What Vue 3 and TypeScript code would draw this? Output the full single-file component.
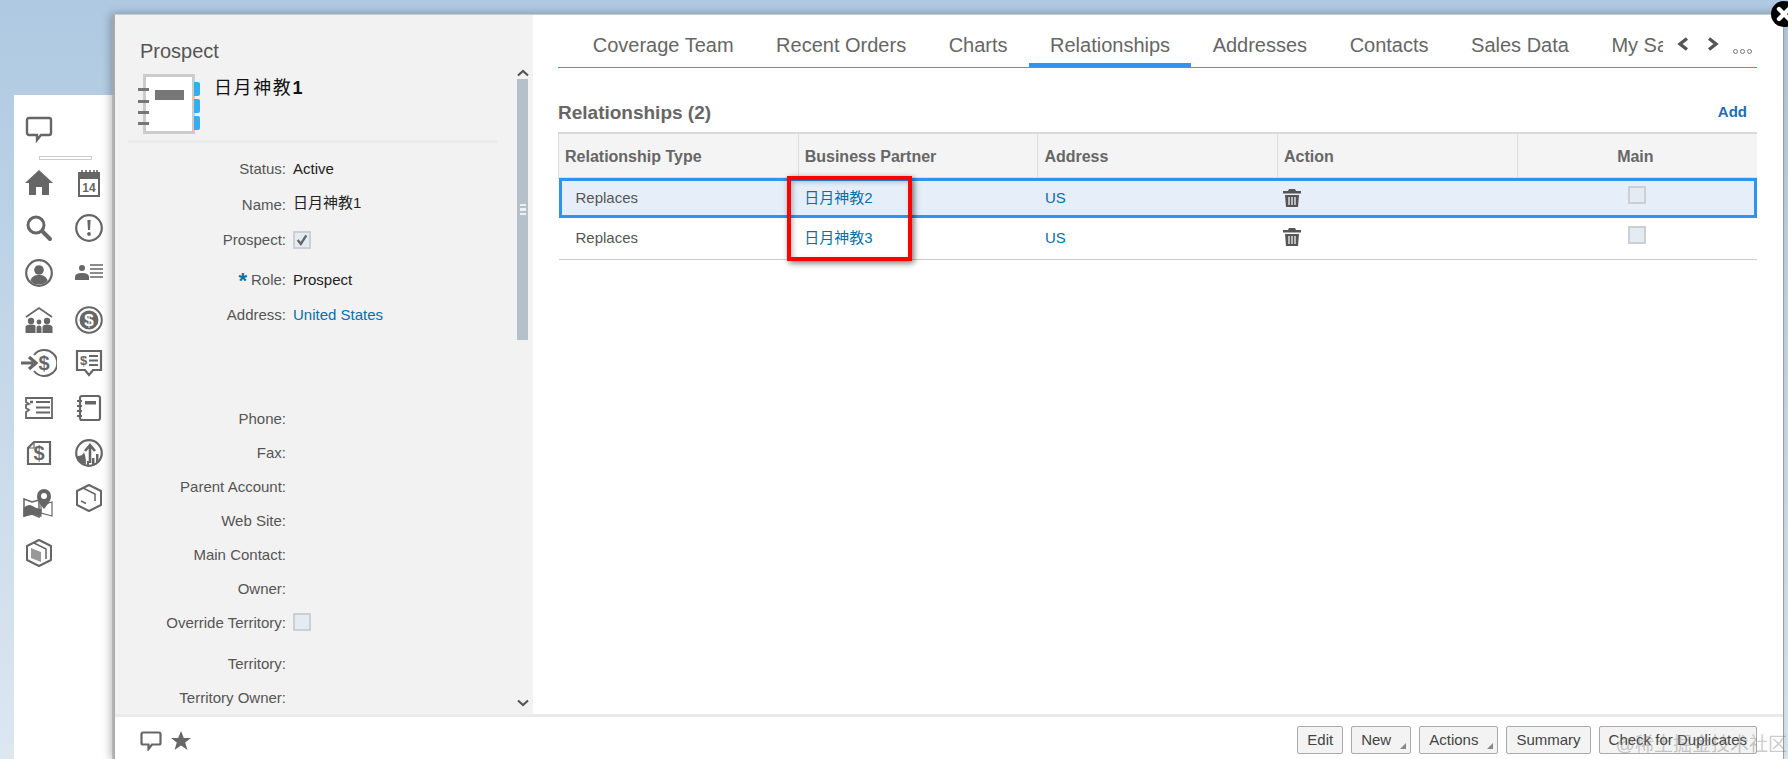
<script setup lang="ts">
interface Row {
  label: string
  value?: string
  kind?: 'text' | 'cjk' | 'link' | 'check' | 'box'
  required?: boolean
  cls?: string
}

const tabs = ['Coverage Team', 'Recent Orders', 'Charts', 'Relationships', 'Addresses', 'Contacts', 'Sales Data', 'My Sales']
const activeTab = 'Relationships'

const rows: Row[] = [
  { label: 'Status:', value: 'Active', cls: 'wide' },
  { label: 'Name:', value: '日月神教1', kind: 'cjk', cls: 'wide name' },
  { label: 'Prospect:', kind: 'check', cls: 'wide' },
  { label: 'Role:', value: 'Prospect', required: true, cls: 'wide tall' },
  { label: 'Address:', value: 'United States', kind: 'link', cls: 'wide gap-after' },
  { label: 'Phone:' },
  { label: 'Fax:' },
  { label: 'Parent Account:' },
  { label: 'Web Site:' },
  { label: 'Main Contact:' },
  { label: 'Owner:' },
  { label: 'Override Territory:', kind: 'box', cls: 'gap-small' },
  { label: 'Territory:' },
  { label: 'Territory Owner:' },
]

const relationships = [
  { type: 'Replaces', partner: '日月神教2', address: 'US', selected: true },
  { type: 'Replaces', partner: '日月神教3', address: 'US', selected: false },
]

const buttons = [
  { text: 'Edit', menu: false },
  { text: 'New', menu: true },
  { text: 'Actions', menu: true },
  { text: 'Summary', menu: false },
  { text: 'Check for Duplicates', menu: false },
]
</script>

<template>
  <div class="page">
    <aside class="sidebar">
      <svg class="ico chat" viewBox="0 0 28 28"><path d="M4 3h20a2 2 0 0 1 2 2v13a2 2 0 0 1-2 2h-8l-4 5v-5H4a2 2 0 0 1-2-2V5a2 2 0 0 1 2-2z" fill="none" stroke="#666" stroke-width="2.4" /></svg>
      <div class="rule"></div>
      <div class="icon-grid">
        <svg class="ico" viewBox="0 0 28 28"><path d="M14 1 0 14h4v12h7v-8h6v8h7V14h4z" fill="#666" /></svg>
        <svg class="ico" viewBox="0 0 28 28"><path d="M4 4h20v23H4z" fill="none" stroke="#666" stroke-width="2" /><path d="M4 4h20v6H4z" fill="#666" /><path d="M7 1v6M11 1v6M15 1v6M19 1v6M22 1v6" stroke="#666" stroke-width="1.6" /><text x="14" y="23" text-anchor="middle" class="cal-num">14</text></svg>
        <svg class="ico" viewBox="0 0 28 28"><circle cx="11" cy="11" r="8" fill="none" stroke="#666" stroke-width="3" /><path d="M18 18l7 7" stroke="#666" stroke-width="4" stroke-linecap="round" /></svg>
        <svg class="ico" viewBox="0 0 28 28"><circle cx="14" cy="14" r="12.8" fill="none" stroke="#666" stroke-width="2.2" /><path d="M12.4 6h3.2l-.6 10h-2z" fill="#666" /><circle cx="14" cy="20" r="1.9" fill="#666" /></svg>
        <svg class="ico" viewBox="0 0 28 28"><circle cx="14" cy="14" r="12.8" fill="none" stroke="#666" stroke-width="2.2" /><circle cx="14" cy="11" r="4.8" fill="#666" /><path d="M5.5 22c1-5 4.5-6 8.5-6s7.500 1 8.500 6a12 12 0 0 1-17 0z" fill="#666" /></svg>
        <svg class="ico" viewBox="0 0 28 28"><circle cx="7" cy="9" r="3" fill="#666" /><path d="M0 21v-3q0-4 7-4t7 4v3z" fill="#666" /><path d="M15 6h13M15 10h13M15 14h13M15 18h13" stroke="#666" stroke-width="1.7" /></svg>
        <svg class="ico" viewBox="0 0 28 28"><path d="M1 11 14 2l13 9" fill="none" stroke="#666" stroke-width="1.8" /><circle cx="6" cy="15" r="3.2" fill="#666" /><circle cx="14" cy="16" r="2.4" fill="#666" /><circle cx="22" cy="15" r="3.2" fill="#666" /><path d="M0.500 27v-6q0-2.500 5.500-2.500t4.500 2.500v6zM11.500 27v-5q0-2.500 2.500-2.500t2.500 2.500v5zM17.500 27v-6q0-2.500 4.500-2.500t5.500 2.500v6z" fill="#666" /></svg>
        <svg class="ico" viewBox="0 0 28 28"><circle cx="14" cy="14" r="12.8" fill="none" stroke="#666" stroke-width="2" /><circle cx="14" cy="14" r="9.5" fill="#666" /><text x="14" y="20" text-anchor="middle" class="dollar light">$</text></svg>
        <svg class="ico wide-ico" viewBox="0 0 36 28"><path d="M13 6a13 13 0 1 1 0 16" fill="none" stroke="#666" stroke-width="2" /><path d="M0 14h12M8 8l7 6-7 6" fill="none" stroke="#666" stroke-width="3.200" /><text x="23" y="21" text-anchor="middle" class="dollar">$</text></svg>
        <svg class="ico" viewBox="0 0 28 28"><path d="M2 2h24v19h-8l-4 5-4-5H2z" fill="none" stroke="#666" stroke-width="2.2" /><text x="8.500" y="16" text-anchor="middle" class="dollar small">$</text><path d="M14 7h9M14 11.500h9M14 16h9" stroke="#666" stroke-width="2" /></svg>
        <svg class="ico" viewBox="0 0 28 28"><path d="M1 4h26v20H1v-6l3-2-3-2v-3l3-1-3-2z" fill="none" stroke="#666" stroke-width="1.8" /><path d="M11 8h14M11 13.500h14M11 18.500h14" stroke="#666" stroke-width="1.8" /><path d="M5 8h3" stroke="#666" stroke-width="2.5" /></svg>
        <svg class="ico" viewBox="0 0 28 28"><rect x="5" y="2" width="20" height="24" rx="2" fill="none" stroke="#666" stroke-width="2.2" /><path d="M10 7h11v3.500H10z" fill="#666" /><path d="M2 7h5M2 12h5M2 17h5M2 22h5" stroke="#666" stroke-width="2" /></svg>
        <svg class="ico" viewBox="0 0 28 28"><path d="M9 3h16v22H3V9z" fill="none" stroke="#666" stroke-width="2.2" /><path d="M9 3v6H3" fill="none" stroke="#666" stroke-width="1.2" /><text x="14" y="21" text-anchor="middle" class="dollar">$</text></svg>
        <svg class="ico" viewBox="0 0 28 28"><circle cx="14" cy="14" r="12.8" fill="none" stroke="#666" stroke-width="2.2" /><path d="M2 17c4 0 6-1 7-4 1 3 2 6 2 12-4 0-8-3-9-8z" fill="#666" /><path d="M15 24V8M10 12l5-6 5 6" fill="none" stroke="#666" stroke-width="2.6" /><path d="M12 26v-4h2v4zM17 26v-7h2.500v6zM21 24v-9h2.500v6z" fill="#666" /></svg>
        <svg class="ico map-ico" viewBox="0 0 30 30"><path d="M1 11l8 3 7-2v17l-7-3-8 2z" fill="#fff" stroke="#666" stroke-width="1.5" /><path d="M0.500 20q5-5 9-2t9 3v8l-9-3-9 3z" fill="#666" /><path d="M29 28l-11-3V13l4 3 7-2z" fill="none" stroke="#666" stroke-width="1.2" /><path d="M21 21c-4-5-7-8-7-13a7 7 0 0 1 14 0c0 5-3 8-7 13z" fill="#666" /><circle cx="21" cy="8" r="3" fill="#fff" /></svg>
        <svg class="ico box-up" viewBox="0 0 28 28"><path d="M14 1 26 7v14l-12 6L2 21V7z" fill="none" stroke="#666" stroke-width="2" stroke-linejoin="round" /><path d="M8 4l12 6v7M6 17l5 2.500" fill="none" stroke="#666" stroke-width="1.500" /></svg>
        <svg class="ico" viewBox="0 0 28 28"><path d="M14 1 26 7v14l-12 6L2 21V7z" fill="none" stroke="#666" stroke-width="2" stroke-linejoin="round" /><path d="M9 4l12 6v10" fill="none" stroke="#666" stroke-width="1.5" /><path d="M6 9l10 4v10L6 19z" fill="#999" /></svg>
      </div>
    </aside>

    <div class="dialog">
      <div class="dialog-main">
        <section class="panel">
          <div class="panel-scroll">
            <header class="panel-head">
              <div class="panel-type">Prospect</div>
              <div class="panel-title-row">
                <svg class="notebook" viewBox="0 0 62 60">
                  <rect x="6.5" y="1.5" width="49" height="57" fill="#fff" stroke="#ccc" stroke-width="3" />
                  <path d="M0 14h11v3H0zM0 26h11v3H0zM0 37h11v3H0zM0 48h11v3H0z" fill="#777" />
                  <rect x="17" y="16" width="29" height="10" fill="#777" />
                  <path d="M56 8h4a2 2 0 0 1 2 2v10a2 2 0 0 1-2 2h-4zM56 25h4a2 2 0 0 1 2 2v10a2 2 0 0 1-2 2h-4zM56 42h4a2 2 0 0 1 2 2v10a2 2 0 0 1-2 2h-4z" fill="#35aef0" />
                </svg>
                <div class="panel-title">日月神教<b>1</b></div>
              </div>
            </header>
            <div class="form">
              <div v-for="row in rows" :key="row.label" class="form-row" :class="row.cls">
                <label class="form-label"><span v-if="row.required" class="star">*</span>{{ row.label }}</label>
                <div class="form-value">
                  <a v-if="row.kind === 'link'" class="link">{{ row.value }}</a>
                  <span v-else-if="row.kind === 'cjk'" class="cjk">{{ row.value }}</span>
                  <span v-else-if="row.kind === 'check'" class="checkbox">
                    <svg viewBox="0 0 18 18"><path d="M3.5 9l4 5 7-11" fill="none" stroke="#666" stroke-width="3" /></svg>
                  </span>
                  <span v-else-if="row.kind === 'box'" class="checkbox"></span>
                  <template v-else>{{ row.value }}</template>
                </div>
              </div>
            </div>
          </div>
          <div class="scrollbar">
            <svg class="scroll-arrow" viewBox="0 0 12 8"><path d="M1 6.5 6 2l5 4.500" fill="none" stroke="#555" stroke-width="2.2" /></svg>
            <div class="scroll-track">
              <div class="scroll-thumb"><i></i><i></i><i></i></div>
            </div>
            <svg class="scroll-arrow down" viewBox="0 0 12 8"><path d="M1 1.5 6 6l5-4.500" fill="none" stroke="#555" stroke-width="2.2" /></svg>
          </div>
        </section>

        <section class="content">
          <nav class="tabs">
            <div class="tab-strip">
              <div v-for="tab in tabs" :key="tab" class="tab" :class="{ active: tab === activeTab }">{{ tab }}</div>
            </div>
            <svg class="chevron" viewBox="0 0 12 14"><path d="M10 1.500 3 7l7 5.500" fill="none" stroke="#555" stroke-width="3.4" /></svg>
            <svg class="chevron next" viewBox="0 0 12 14"><path d="M2 1.500 9 7l-7 5.500" fill="none" stroke="#555" stroke-width="3.4" /></svg>
            <div class="more"><i></i><i></i><i></i></div>
          </nav>

          <div class="section-head">
            <h2>Relationships (2)</h2>
            <a class="add">Add</a>
          </div>

          <div class="table-wrap">
            <table class="grid">
              <thead>
                <tr>
                  <th>Relationship Type</th>
                  <th>Business Partner</th>
                  <th>Address</th>
                  <th>Action</th>
                  <th class="center">Main</th>
                </tr>
              </thead>
              <tbody>
                <tr v-for="rel in relationships" :key="rel.partner" :class="{ selected: rel.selected }">
                  <td class="type">{{ rel.type }}</td>
                  <td class="partner"><a class="link cjk">{{ rel.partner }}</a></td>
                  <td class="addr"><a class="link">{{ rel.address }}</a></td>
                  <td class="action">
                    <svg class="trash" viewBox="0 0 20 20"><path d="M7 1h6l1 2h5v2.500H1V3h5zM3 7h14l-1 12H4z" fill="#555" /><path d="M7 9v8M10 9v8M13 9v8" stroke="#fff" stroke-width="1.2" /></svg>
                  </td>
                  <td class="center"><span class="checkbox main-box"></span></td>
                </tr>
              </tbody>
            </table>
            <div class="callout"></div>
          </div>
        </section>
      </div>

      <footer class="footer">
        <div class="footer-icons">
          <svg class="foot-ico" viewBox="0 0 22 20"><path d="M3 1.5h16a1.500 1.500 0 0 1 1.500 1.500v9a1.500 1.500 0 0 1-1.500 1.500h-7L8.500 18v-4.500H3A1.500 1.500 0 0 1 1.500 12V3A1.500 1.500 0 0 1 3 1.500z" fill="none" stroke="#666" stroke-width="2.2" /></svg>
          <svg class="foot-ico" viewBox="0 0 22 20"><path d="M11 0l2.800 7H21l-5.800 4.600L17.500 19 11 14.500 4.500 19l2.300-7.400L1 7h7.200z" fill="#666" /></svg>
        </div>
        <div class="footer-buttons">
          <button v-for="btn in buttons" :key="btn.text" class="btn" :class="{ menu: btn.menu }">{{ btn.text }}</button>
        </div>
      </footer>
    </div>

    <button class="close" aria-label="Close">
      <svg viewBox="0 0 26 26"><path d="M8 8l10 10M18 8 8 18" stroke="#fff" stroke-width="4.4" stroke-linecap="round" /></svg>
    </button>
    <div class="watermark">@稀土掘金技术社区</div>
  </div>
</template>

<style scoped>
.page {
  position: relative;
  display: flex;
  align-items: flex-start;
  width: 1788px;
  height: 759px;
  overflow: hidden;
  box-sizing: border-box;
  padding: 14px 5px 0 14px;
  background: linear-gradient(180deg, #aec9e1 0%, #dce7f0 100%);
  font-family: "Liberation Sans", "Noto Sans CJK SC", sans-serif;
  font-size: 15px;
  color: #333;
}

.sidebar {
  flex: 0 0 100px;
  min-width: 0;
  height: 664px;
  margin-top: 81px;
  background: #fff;
  box-sizing: border-box;
  padding-top: 20px;
}

.ico {
  display: block;
  width: 28px;
  height: 28px;
}

.chat {
  margin-left: 11px;
}

.rule {
  width: 51px;
  height: 2px;
  margin: 13px 0 0 25px;
  border: 1px solid #ccc;
}

.icon-grid {
  display: grid;
  grid-template-columns: 50px 39px;
  grid-template-rows: 45px 44.5px 47.5px 42.5px 45.5px 44.5px 50.5px 50px;
  justify-items: start;
  align-items: start;
  padding: 9px 0 0 11px;
}

.wide-ico {
  width: 36px;
  margin-left: -4px;
}

.map-ico {
  width: 30px;
  height: 30px;
  margin: -1px 0 0 -2px;
}

.box-up {
  margin-top: -5px;
}

.cal-num {
  font: bold 12px "Liberation Sans", sans-serif;
  fill: #666;
}

.dollar {
  font: bold 20px "Liberation Sans", sans-serif;
  fill: #666;
}

.dollar.light {
  fill: #fff;
  font-size: 17px;
}

.dollar.small {
  font-size: 13px;
}

.dialog {
  flex: 1;
  min-width: 0;
  height: 745px;
  display: flex;
  flex-direction: column;
  background: #fff;
  border-top: 1px solid #ccc;
  border-left: 1px solid #aaa;
  box-shadow: -2px 0 0 rgba(170, 170, 170, 0.7), -3px 0 9px rgba(0, 0, 0, 0.3), 1px 0 0 #aaa;
}

.dialog-main {
  display: flex;
  height: 699px;
}

.panel {
  position: relative;
  flex: 0 0 418px;
  display: flex;
  background: #f2f2f2;
  overflow: hidden;
}

.panel-scroll {
  flex: 1;
  padding: 0 20px 0 13px;
  min-width: 0;
}

.panel-head {
  border-bottom: 3px solid #eaeaea;
  height: 128px;
  box-sizing: border-box;
}

.panel-type {
  padding: 24px 0 0 12px;
  font-size: 20px;
  line-height: 24px;
  color: #555;
}

.panel-title-row {
  display: flex;
  align-items: flex-start;
  padding: 11px 0 0 10px;
}

.notebook {
  width: 62px;
  height: 60px;
  flex: none;
}

.panel-title {
  margin: 1px 0 0 14px;
  font-size: 18px;
  letter-spacing: 1.6px;
  line-height: 26px;
  color: #111;
}

.panel-title b {
  letter-spacing: 0;
}

.form {
  padding-top: 8px;
}

.form-row {
  display: flex;
  align-items: center;
  height: 34px;
}

.form-row.wide {
  height: 35px;
}

.form-row.name {
  height: 36px;
}

.form-row.tall {
  margin-top: 5px;
}

.form-row.gap-after {
  margin-bottom: 69px;
}

.form-row.gap-small {
  margin-bottom: 7px;
}

.form-label {
  flex: 0 0 158px;
  text-align: right;
  color: #555;
  white-space: nowrap;
}

.star {
  color: #0a6ea8;
  font-size: 22px;
  font-weight: bold;
  line-height: 10px;
  margin-right: 4px;
  vertical-align: -3px;
}

.form-value {
  padding-left: 7px;
  color: #222;
  display: flex;
  align-items: center;
}

.link {
  color: #0a6ea8;
}

.cjk {
  display: block;
  font-size: 15px;
  line-height: 18px;
  margin-bottom: 3px;
}

.checkbox {
  display: block;
  width: 14px;
  height: 14px;
  border: 2px solid #ccd0d4;
  background: #e3ebf3;
}

.checkbox svg {
  display: block;
  width: 14px;
  height: 14px;
}

.scrollbar {
  flex: 0 0 16px;
  display: flex;
  flex-direction: column;
  align-items: flex-start;
  padding: 54px 0 7px;
  box-sizing: border-box;
  height: 699px;
}

.scroll-arrow {
  width: 12px;
  height: 8px;
  flex: none;
}

.scroll-track {
  flex: 1;
  width: 11px;
  padding-top: 2px;
}

.scroll-thumb {
  height: 261px;
  width: 11px;
  background: #b6c0ca;
  display: flex;
  flex-direction: column;
  align-items: center;
  justify-content: center;
  gap: 2px;
}

.scroll-thumb i {
  width: 6px;
  height: 2.5px;
  background: #eef1f4;
}

.content {
  flex: 1;
  min-width: 0;
  padding: 0 26px 0 25px;
}

.tabs {
  display: flex;
  align-items: flex-start;
  height: 52px;
  border-bottom: 1px solid #4a97de;
}

.tab-strip {
  display: flex;
  flex: 0 0 1105px;
  box-sizing: border-box;
  padding-left: 13.5px;
  overflow: hidden;
  height: 52px;
}

.tab {
  flex: none;
  padding: 18px 21.25px 0;
  height: 30px;
  line-height: 25px;
  font-size: 20px;
  color: #666;
  white-space: nowrap;
  border-bottom: 4px solid transparent;
}

.tab.active {
  border-bottom-color: #2f94f0;
}

.chevron {
  width: 12px;
  height: 14px;
  margin: 22px 0 0 14px;
  flex: none;
}

.chevron.next {
  margin-left: 18px;
}

.more {
  display: flex;
  gap: 2px;
  margin: 34px 0 0 14px;
}

.more i {
  width: 5px;
  height: 5px;
  box-sizing: border-box;
  border: 1px solid #777;
  border-radius: 50%;
}

.section-head {
  display: flex;
  justify-content: space-between;
  align-items: center;
  height: 64px;
  padding-right: 10px;
}

.section-head h2 {
  margin: 26px 0 0;
  font-size: 19px;
  color: #666;
}

.add {
  margin-top: 23px;
  font-weight: bold;
  font-size: 15px;
  color: #1a6cc0;
}

.table-wrap {
  position: relative;
  width: 1199px;
}

.grid {
  width: 100%;
  border-collapse: collapse;
  table-layout: fixed;
  border-top: 2px solid #d8d8d8;
}

.grid th {
  height: 41px;
  padding: 2px 6px 0;
  background: #f4f4f4;
  border-left: 1px solid #ddd;
  border-bottom: 2px solid #ddd;
  border-top: 1px solid #fff;
  text-align: left;
  font-size: 16px;
  color: #666;
}

.grid th.center,
.grid td.center {
  text-align: center;
}

.grid th.center {
  padding-right: 10px;
}

.grid td {
  box-sizing: border-box;
  height: 40px;
  padding: 0;
  color: #555;
}

.grid tbody tr:last-child td {
  height: 41px;
}

.grid tbody tr {
  border-bottom: 1px solid #ccc;
}

.grid tr.selected {
  background: #e6eff9;
  outline: 3px solid #2f94f0;
  outline-offset: -3px;
  border-bottom: 0;
}

.grid td.type {
  padding: 0 0 2px 17px;
}

.grid td.partner {
  padding: 2px 0 0 6px;
}

.grid td.addr {
  padding: 0 0 2px 7px;
}

.grid td.action {
  padding: 0 0 2px 4px;
}

.trash {
  display: block;
  width: 20px;
  height: 20px;
}

.main-box {
  display: inline-block;
  margin-bottom: 4px;
  width: 14px;
  height: 14px;
}

.callout {
  position: absolute;
  left: 229px;
  top: 44px;
  width: 117px;
  height: 77px;
  border: 4px solid #f00;
  box-shadow: 2px 2px 6px rgba(0, 0, 0, 0.55), inset 2px 2px 5px rgba(0, 0, 0, 0.25);
  pointer-events: none;
}

.footer {
  flex: 1;
  display: flex;
  align-items: center;
  justify-content: space-between;
  border-top: 3px solid #eaeaea;
  padding: 0 26px 0 25px;
}

.footer-icons {
  display: flex;
  gap: 8px;
  margin-top: 4px;
}

.foot-ico {
  display: block;
  width: 22px;
  height: 20px;
}

.footer-buttons {
  display: flex;
  gap: 8px;
  margin-top: 2px;
}

.btn {
  position: relative;
  height: 28px;
  padding: 0 9px;
  background: #f3f3f3;
  border: 1px solid #aaa;
  border-radius: 2px;
  font: 15px "Liberation Sans", sans-serif;
  color: #444;
}

.btn.menu {
  padding-right: 19px;
}

.btn.menu::after {
  content: "";
  position: absolute;
  right: 4px;
  bottom: 4px;
  border-left: 6px solid transparent;
  border-bottom: 6px solid #888;
}

.close {
  position: absolute;
  top: 1px;
  left: 1771px;
  width: 26px;
  height: 26px;
  padding: 0;
  border: 0;
  border-radius: 50%;
  background: #000;
}

.close svg {
  display: block;
  width: 26px;
  height: 26px;
}

.watermark {
  position: absolute;
  right: 1px;
  bottom: 1px;
  font-size: 19px;
  line-height: 26px;
  color: rgba(120, 120, 120, 0.4);
  white-space: nowrap;
}
</style>
